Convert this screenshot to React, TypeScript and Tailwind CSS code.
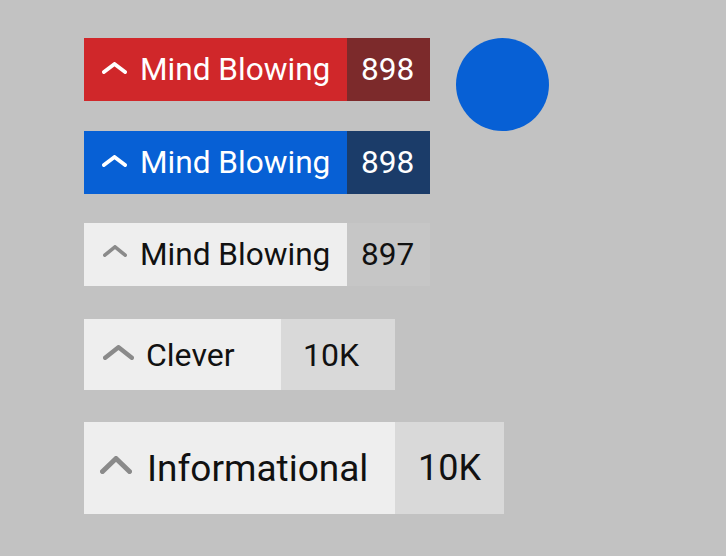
import React from 'react'

type Variant = 'red' | 'blue' | 'plain'

interface ReactionProps {
  label: string
  count: string
  variant: Variant
  size: 'md' | 'lg' | 'xl'
}

// chevron drawn in pixel units so the box is the visible mark
const Chevron = ({ w, h, sw, className }: { w: number; h: number; sw: number; className?: string }) => (
  <svg className={className} width={w} height={h} viewBox={`0 0 ${w} ${h}`} fill="none" stroke="currentColor" strokeWidth={sw} strokeLinecap="round" strokeLinejoin="round">
    <path d={`M${sw / 2} ${h - sw / 2} L${w / 2} ${sw / 2} L${w - sw / 2} ${h - sw / 2}`} />
  </svg>
)

function Reaction({ label, count, variant, size }: ReactionProps) {
  const main =
    variant === 'red'
      ? 'bg-[#d0272a] text-white'
      : variant === 'blue'
        ? 'bg-[#0760d5] text-white'
        : 'bg-[#eeeeee] text-[#111111]'
  const side =
    variant === 'red'
      ? 'bg-[#7c2a2b] text-white'
      : variant === 'blue'
        ? 'bg-[#1b3c69] text-white'
        : size === 'md'
          ? 'bg-[#c6c6c6] text-[#111111]'
          : 'bg-[#d9d9d9] text-[#111111]'
  const chevColor = variant === 'plain' ? 'text-[#8a8a8a]' : 'text-white'

  if (size === 'md') {
    const plain = variant === 'plain'
    return (
      <div className="flex h-[63px] w-[346px]">
        <div className={`flex w-[263px] items-center ${plain ? 'pl-[19px]' : 'pl-[18px]'} ${main}`}>
          {plain ? (
            <Chevron w={24} h={12} sw={3.6} className={`mb-[8px] shrink-0 ${chevColor}`} />
          ) : (
            <Chevron w={25} h={12} sw={3.8} className={`mb-[4px] shrink-0 ${chevColor}`} />
          )}
          <span className="ml-[13px] text-[31.6px] leading-none">{label}</span>
        </div>
        <div className={`flex w-[83px] items-center pl-[14px] text-[31.6px] leading-none ${side}`}>{count}</div>
      </div>
    )
  }
  if (size === 'lg') {
    return (
      <div className="flex h-[71px] w-[311px]">
        <div className={`flex w-[197px] items-center pl-[19px] ${main}`}>
          <Chevron w={31} h={15} sw={4.4} className={`mb-[4px] shrink-0 ${chevColor}`} />
          <span className="ml-[12px] text-[32px] leading-none">{label}</span>
        </div>
        <div className={`flex w-[114px] items-center pl-[22px] text-[32px] leading-none ${side}`}>{count}</div>
      </div>
    )
  }
  return (
    <div className="flex h-[92px] w-[420px]">
      <div className={`flex w-[311px] items-center pl-[16px] ${main}`}>
        <Chevron w={32} h={18} sw={5} className={`mb-[6px] shrink-0 ${chevColor}`} />
        <span className="ml-[15px] text-[37px] leading-none">{label}</span>
      </div>
      <div className={`flex w-[109px] items-center pl-[23px] text-[36px] leading-none ${side}`}>{count}</div>
    </div>
  )
}

export default function App() {
  return (
    <div className="h-[556px] w-[726px] bg-[#c2c2c2] pl-[84px] pt-[38px]" style={{ fontFamily: 'Roboto, "Noto Sans", sans-serif' }}>
      <div className="flex flex-col">
        <div className="flex items-start gap-[26px]">
          <Reaction label="Mind Blowing" count="898" variant="red" size="md" />
          <div className="h-[93px] w-[93px] rounded-full bg-[#0760d5]" />
        </div>
        <div>
          <Reaction label="Mind Blowing" count="898" variant="blue" size="md" />
        </div>
        <div className="mt-[29px]">
          <Reaction label="Mind Blowing" count="897" variant="plain" size="md" />
        </div>
        <div className="mt-[33px]">
          <Reaction label="Clever" count="10K" variant="plain" size="lg" />
        </div>
        <div className="mt-[32px]">
          <Reaction label="Informational" count="10K" variant="plain" size="xl" />
        </div>
      </div>
    </div>
  )
}
